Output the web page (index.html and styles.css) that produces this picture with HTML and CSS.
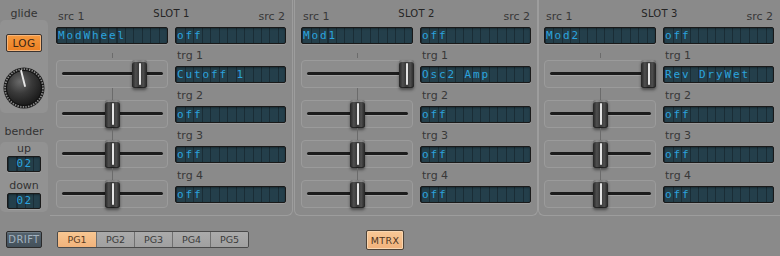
FILE: index.html
```html
<!DOCTYPE html>
<html>
<head>
<meta charset="utf-8">
<link rel="stylesheet" href="styles.css">
</head>
<body>
<div class="app">
  <div class="main">
    <aside class="side">
      <div class="side-label glide-label">glide</div>
      <div class="panel glide-panel">
        <div class="btn btn-log">LOG</div>
        <svg class="knob" viewBox="0 0 44 44" width="42" height="42">
          <defs>
            <radialGradient id="kb" cx="38%" cy="32%" r="75%">
              <stop offset="0" stop-color="#6a6a6a"/>
              <stop offset="0.45" stop-color="#3a3a3a"/>
              <stop offset="1" stop-color="#151515"/>
            </radialGradient>
          </defs>
          <circle cx="22" cy="22" r="21.5" fill="#1a1a1a"/>
          <circle cx="22" cy="22" r="19.8" fill="none" stroke="#8a8a8a" stroke-width="2" stroke-dasharray="1.4 1.4"/>
          <circle cx="22" cy="22" r="18.3" fill="url(#kb)" stroke="#111" stroke-width="1"/>
          <line x1="23" y1="20" x2="19" y2="4" stroke="#e6e6e6" stroke-width="2" stroke-linecap="round"/>
        </svg>
      </div>
      <div class="side-label bender-label">bender</div>
      <div class="panel bender-panel">
        <div class="mini-label">up</div>
        <div class="lcd lcd-small">02</div>
        <div class="mini-label down">down</div>
        <div class="lcd lcd-small">02</div>
      </div>
    </aside>

    <div class="slots">
      <section class="slot slot-1">
        <div class="slot-head"><span class="src src-l">src 1</span><span class="slot-title">SLOT 1</span><span class="src src-r">src 2</span></div>
        <div class="pair"><div class="lcd">ModWheel</div><div class="lcd">off</div></div>
        <div class="rows">
          <div class="row"><div class="slider"><div class="track"></div><div class="thumb" style="left:75px"></div></div><div class="trg"><div class="trg-lbl">trg 1</div><div class="lcd">Cutoff 1</div></div></div>
          <div class="row"><div class="slider"><div class="track"></div><div class="thumb" style="left:48px"></div></div><div class="trg"><div class="trg-lbl">trg 2</div><div class="lcd">off</div></div></div>
          <div class="row"><div class="slider"><div class="track"></div><div class="thumb" style="left:48px"></div></div><div class="trg"><div class="trg-lbl">trg 3</div><div class="lcd">off</div></div></div>
          <div class="row"><div class="slider"><div class="track"></div><div class="thumb" style="left:48px"></div></div><div class="trg"><div class="trg-lbl">trg 4</div><div class="lcd">off</div></div></div>
        </div>
      </section>

      <section class="slot slot-2">
        <div class="slot-head"><span class="src src-l">src 1</span><span class="slot-title">SLOT 2</span><span class="src src-r">src 2</span></div>
        <div class="pair"><div class="lcd">Mod1</div><div class="lcd">off</div></div>
        <div class="rows">
          <div class="row"><div class="slider"><div class="track"></div><div class="thumb" style="left:97px"></div></div><div class="trg"><div class="trg-lbl">trg 1</div><div class="lcd">Osc2 Amp</div></div></div>
          <div class="row"><div class="slider"><div class="track"></div><div class="thumb" style="left:48px"></div></div><div class="trg"><div class="trg-lbl">trg 2</div><div class="lcd">off</div></div></div>
          <div class="row"><div class="slider"><div class="track"></div><div class="thumb" style="left:48px"></div></div><div class="trg"><div class="trg-lbl">trg 3</div><div class="lcd">off</div></div></div>
          <div class="row"><div class="slider"><div class="track"></div><div class="thumb" style="left:48px"></div></div><div class="trg"><div class="trg-lbl">trg 4</div><div class="lcd">off</div></div></div>
        </div>
      </section>

      <section class="slot slot-3">
        <div class="slot-head"><span class="src src-l">src 1</span><span class="slot-title">SLOT 3</span><span class="src src-r">src 2</span></div>
        <div class="pair"><div class="lcd">Mod2</div><div class="lcd">off</div></div>
        <div class="rows">
          <div class="row"><div class="slider"><div class="track"></div><div class="thumb" style="left:96px"></div></div><div class="trg"><div class="trg-lbl">trg 1</div><div class="lcd">Rev DryWet</div></div></div>
          <div class="row"><div class="slider"><div class="track"></div><div class="thumb" style="left:48px"></div></div><div class="trg"><div class="trg-lbl">trg 2</div><div class="lcd">off</div></div></div>
          <div class="row"><div class="slider"><div class="track"></div><div class="thumb" style="left:48px"></div></div><div class="trg"><div class="trg-lbl">trg 3</div><div class="lcd">off</div></div></div>
          <div class="row"><div class="slider"><div class="track"></div><div class="thumb" style="left:48px"></div></div><div class="trg"><div class="trg-lbl">trg 4</div><div class="lcd">off</div></div></div>
        </div>
      </section>
    </div>
  </div>

  <div class="bottom">
    <div class="btn btn-drift">DRIFT</div>
    <div class="tabs">
      <div class="tab active">PG1</div>
      <div class="tab">PG2</div>
      <div class="tab">PG3</div>
      <div class="tab">PG4</div>
      <div class="tab">PG5</div>
    </div>
    <div class="btn btn-mtrx">MTRX</div>
  </div>
</div>
</body>
</html>
```

FILE: styles.css
```css
html, body {
  margin: 0;
  padding: 0;
}
body {
  background: #8a8a8a;
  font-family: "DejaVu Sans", sans-serif;
  color: #353535;
  width: 780px;
  height: 256px;
  overflow: hidden;
}
.app {
  width: 780px;
  height: 256px;
}
.main {
  display: flex;
  height: 216px;
}

/* ---------- left column ---------- */
.side {
  width: 48px;
  flex: none;
  display: flex;
  flex-direction: column;
}
.side-label {
  font-size: 11px;
  line-height: 13px;
  text-align: center;
  color: #333;
  box-sizing: border-box;
}
.glide-label {
  padding-top: 7px;
  height: 20px;
}
.panel {
  background: #929292;
  border-radius: 5px;
  display: flex;
  flex-direction: column;
  align-items: center;
}
.glide-panel {
  height: 93px;
}
.btn {
  display: flex;
  align-items: center;
  justify-content: center;
  box-sizing: border-box;
  border-radius: 2px;
  font-size: 10px;
  letter-spacing: 0.4px;
}
.btn-log {
  margin-top: 14px;
  width: 36px;
  height: 18px;
  border: 1px solid #3a3330;
  background: linear-gradient(#f59a40, #ec7f22);
  box-shadow: inset 0 0 0 1px #f6b57a;
  color: #3a2616;
  font-size: 10.5px;
}
.knob {
  display: block;
  margin-top: 15px;
  width: 42px;
  height: 42px;
}
.bender-label {
  padding-top: 12px;
  height: 29px;
}
.bender-panel {
  height: 70px;
}
.mini-label {
  font-size: 11px;
  line-height: 13px;
  color: #333;
}
.mini-label.down {
  margin-top: 7px;
}
.lcd.lcd-small {
  width: 34px;
  height: 16px;
  margin-top: 1px;
  padding: 0;
  text-align: center;
  line-height: 14px;
  letter-spacing: 1.5px;
  text-indent: 1px;
}

/* ---------- LCD ---------- */
.lcd {
  height: 17px;
  box-sizing: border-box;
  border: 1px solid #191919;
  border-radius: 2px;
  background: repeating-linear-gradient(90deg, #1a2d36 0 1px, #243f4b 1px 8.5px);
  color: #2ba3de;
  font-family: "DejaVu Sans Mono", monospace;
  font-size: 11px;
  line-height: 15px;
  letter-spacing: 1.88px;
  padding-left: 1px;
  white-space: pre;
  overflow: hidden;
  box-shadow: 0 1px 0 rgba(255, 255, 255, 0.14), inset 0 1px 2px rgba(0, 0, 0, 0.35);
}

/* ---------- slots ---------- */
.slots {
  display: flex;
  margin-left: 2px;
}
.slot {
  height: 216px;
  box-sizing: border-box;
  border-bottom: 1px solid #9d9d9d;
  padding: 0 6px 7px;
}
.slot-1 {
  width: 243px;
  border-right: 1px solid #9d9d9d;
  border-bottom-right-radius: 6px;
}
.slot-2 {
  width: 244px;
  margin-left: 1px;
  border-left: 1px solid #9d9d9d;
  border-right: 1px solid #9d9d9d;
  border-bottom-left-radius: 6px;
  border-bottom-right-radius: 6px;
}
.slot-3 {
  width: 242px;
  padding-left: 5px;
  border-left: 1px solid #9d9d9d;
  border-bottom-left-radius: 6px;
}
.slot-head {
  display: flex;
  justify-content: space-between;
  height: 27px;
}
.src {
  font-size: 11px;
  line-height: 13px;
  padding-top: 10px;
  color: #383838;
}
.src-l {
  padding-left: 2px;
}
.src-r {
  padding-right: 1px;
}
.slot-title {
  font-size: 10px;
  line-height: 13px;
  padding-top: 7px;
  color: #242424;
  letter-spacing: 0.2px;
}
.pair,
.row {
  display: grid;
  grid-template-columns: 112px 111px;
  column-gap: 7px;
}
.rows {
  margin-top: 4px;
}
.row {
  height: 40px;
}
.slider {
  position: relative;
  margin-top: 12px;
  height: 28px;
  box-sizing: border-box;
  border: 1px solid #9b9b9b;
  border-radius: 4px;
  background: #8d8d8d;
}
.slider::before {
  content: "";
  position: absolute;
  left: 55px;
  top: -13px;
  width: 1px;
  height: 12px;
  background: #6b6b6b;
}
.row:first-child .slider::before {
  top: -8px;
  height: 5px;
}
.track {
  position: absolute;
  left: 5px;
  right: 4px;
  top: 11px;
  height: 3px;
  background: #1c1c1c;
  border-radius: 2px;
  box-shadow: 0 1px 0 rgba(255, 255, 255, 0.2);
}
.thumb {
  position: absolute;
  top: -1px;
  width: 15px;
  height: 28px;
  border-radius: 3px;
  background: linear-gradient(90deg, #242424 0, #4f4f4f 25%, #393939 45%, #393939 55%, #4f4f4f 75%, #242424 100%);
  box-shadow: inset 0 2px 0 rgba(255, 255, 255, 0.35), inset 0 -1px 0 rgba(0, 0, 0, 0.5), 0 2px 3px rgba(0, 0, 0, 0.45);
}
.thumb::after {
  content: "";
  position: absolute;
  left: 6.5px;
  width: 2px;
  top: 3px;
  bottom: 3px;
  background: #e4e4e4;
  border-radius: 1px;
}
.trg-lbl {
  font-size: 11px;
  line-height: 13px;
  padding-top: 1px;
  padding-left: 2px;
  color: #383838;
}
.trg .lcd {
  margin-top: 4px;
}

/* ---------- bottom bar ---------- */
.bottom {
  display: flex;
  align-items: flex-start;
  padding-top: 15px;
  height: 40px;
  box-sizing: border-box;
}
.btn-drift {
  margin-left: 6px;
  width: 36px;
  height: 17px;
  border: 1px solid #2a2a2a;
  background: linear-gradient(#56646f, #43505a);
  color: #a3b3c0;
  box-shadow: inset 0 1px 0 rgba(255, 255, 255, 0.15);
}
.tabs {
  margin-left: 15px;
  display: flex;
  height: 17px;
  box-sizing: border-box;
  border: 1px solid #4a4a4a;
  border-radius: 2px;
  overflow: hidden;
}
.tab {
  width: 38px;
  box-sizing: border-box;
  border-left: 1px solid #707070;
  background: linear-gradient(#ababab, #a0a0a0);
  color: #3a3a3a;
  font-size: 9.5px;
  line-height: 15px;
  text-align: center;
}
.tab:first-child {
  border-left: none;
}
.tab.active {
  background: linear-gradient(#f8c792, #f1b37c);
  color: #5a3c22;
}
.btn-mtrx {
  margin-left: 117px;
  margin-top: -1px;
  width: 38px;
  height: 20px;
  border: 1px solid #4d4338;
  background: linear-gradient(#f8c896, #f0b27c);
  box-shadow: inset 0 0 0 1px #f9d6b0;
  color: #4e3520;
  font-size: 9.5px;
}
```
